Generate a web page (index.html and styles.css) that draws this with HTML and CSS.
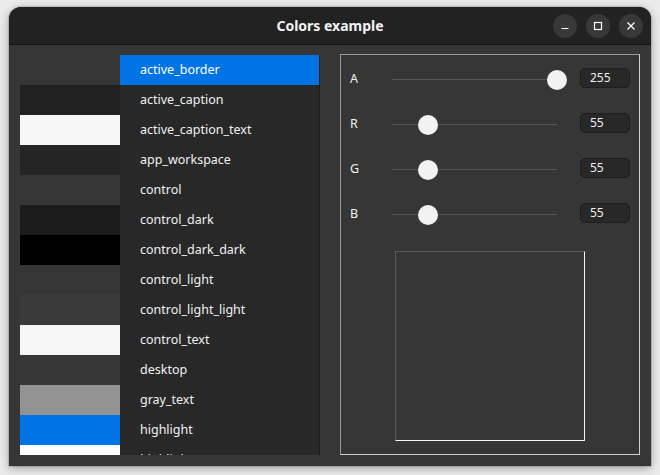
FILE: index.html
```html
<!DOCTYPE html>
<html>
<head>
<meta charset="utf-8">
<link rel="stylesheet" href="styles.css">
</head>
<body>
<div class="window">
  <div class="titlebar">
    <div class="title">Colors example</div>
    <div class="controls">
      <div class="cbtn"><svg width="10" height="10" viewBox="0 0 10 10"><path d="M1.5 7.5h7" stroke="#fff" stroke-width="1.2"/></svg></div>
      <div class="cbtn"><svg width="10" height="10" viewBox="0 0 10 10"><rect x="1.5" y="1.5" width="7" height="7" fill="none" stroke="#fff" stroke-width="1.2"/></svg></div>
      <div class="cbtn"><svg width="10" height="10" viewBox="0 0 10 10"><path d="M1.5 1.5l7 7M8.5 1.5l-7 7" stroke="#fff" stroke-width="1.2"/></svg></div>
    </div>
  </div>
  <div class="content">
    <div class="leftpane">
      <div class="swatches">
        <div class="sw" style="background:#363636"></div>
        <div class="sw" style="background:#212121"></div>
        <div class="sw" style="background:#f6f6f6"></div>
        <div class="sw" style="background:#252525"></div>
        <div class="sw" style="background:#363636"></div>
        <div class="sw" style="background:#1b1b1b"></div>
        <div class="sw" style="background:#000000"></div>
        <div class="sw" style="background:#363636"></div>
        <div class="sw" style="background:#3a3a3a"></div>
        <div class="sw" style="background:#f6f6f6"></div>
        <div class="sw" style="background:#363636"></div>
        <div class="sw" style="background:#939393"></div>
        <div class="sw" style="background:#0073e5"></div>
        <div class="sw" style="background:#ffffff"></div>
      </div>
      <div class="list">
        <div class="item selected">active_border</div>
        <div class="item">active_caption</div>
        <div class="item">active_caption_text</div>
        <div class="item">app_workspace</div>
        <div class="item">control</div>
        <div class="item">control_dark</div>
        <div class="item">control_dark_dark</div>
        <div class="item">control_light</div>
        <div class="item">control_light_light</div>
        <div class="item">control_text</div>
        <div class="item">desktop</div>
        <div class="item">gray_text</div>
        <div class="item">highlight</div>
        <div class="item">highlight_text</div>
      </div>
    </div>
    <div class="rightpane">
      <div class="srow">
        <div class="slabel">A</div>
        <div class="slider"><div class="track"></div><div class="thumb" style="left:100%"></div></div>
        <div class="num">255</div>
      </div>
      <div class="srow">
        <div class="slabel">R</div>
        <div class="slider"><div class="track"></div><div class="thumb" style="left:21.57%"></div></div>
        <div class="num">55</div>
      </div>
      <div class="srow">
        <div class="slabel">G</div>
        <div class="slider"><div class="track"></div><div class="thumb" style="left:21.57%"></div></div>
        <div class="num">55</div>
      </div>
      <div class="srow">
        <div class="slabel">B</div>
        <div class="slider"><div class="track"></div><div class="thumb" style="left:21.57%"></div></div>
        <div class="num">55</div>
      </div>
      <div class="preview"></div>
    </div>
  </div>
</div>
</body>
</html>
```
FILE: styles.css
```css
* { box-sizing: border-box; }
html, body { margin: 0; padding: 0; }
body {
  width: 660px;
  height: 475px;
  background: #ebebeb;
  overflow: hidden;
  font-family: "Noto Sans", "DejaVu Sans", sans-serif;
}
.window {
  margin: 7px 0 0 9px;
  width: 642px;
  height: 459px;
  background: #363636;
  border-radius: 12px 12px 0 0;
  box-shadow: 0 2px 10px rgba(0,0,0,0.35), 0 0 0 1px rgba(0,0,0,0.12);
  overflow: hidden;
  display: flex;
  flex-direction: column;
}
.titlebar {
  height: 38px;
  flex: none;
  background: #222222;
  border-bottom: 1px solid #161616;
  display: flex;
  align-items: center;
  justify-content: center;
  position: relative;
}
.title {
  color: #f2f2f2;
  font-weight: bold;
  font-size: 14px;
  margin-top: -1px;
}
.controls {
  position: absolute;
  right: 8px;
  top: 7px;
  display: flex;
  gap: 9px;
}
.cbtn {
  width: 24px;
  height: 24px;
  border-radius: 50%;
  background: #383838;
  display: flex;
  align-items: center;
  justify-content: center;
}
.content {
  flex: 1;
  display: flex;
  padding: 9px 11px 11px 11px;
  gap: 20px;
}
.leftpane {
  width: 300px;
  height: 400px;
  margin-top: 1px;
  display: flex;
  overflow: hidden;
}
.swatches {
  width: 100px;
  display: flex;
  flex-direction: column;
}
.sw { height: 30px; flex: none; }
.list {
  width: 200px;
  background: #282828;
  border-right: 1px solid #1e1e1e;
  overflow: hidden;
}
.item {
  height: 30px;
  line-height: 30px;
  padding-left: 20px;
  color: #f0f0f0;
  font-size: 12.5px;
}
.item.selected { background: #0073e5; color: #ffffff; }
.rightpane {
  width: 300px;
  height: 401px;
  border: 1px solid #9a9a9a;
  border-right-color: #cfcfcf;
  border-bottom-color: #cfcfcf;
  padding: 1px 9px 0 9px;
  display: flex;
  flex-direction: column;
}
.srow {
  height: 45px;
  display: flex;
  align-items: center;
}
.slabel {
  width: 42px;
  flex: none;
  color: #f0f0f0;
  font-size: 12.5px;
  margin-top: -1px;
}
.slider {
  position: relative;
  width: 165px;
  flex: none;
  height: 20px;
  margin-top: 2px;
}
.track {
  position: absolute;
  left: 0;
  right: 0;
  top: 9px;
  height: 1px;
  background: #555555;
}
.thumb {
  position: absolute;
  top: 0;
  width: 20px;
  height: 20px;
  margin-left: -10px;
  border-radius: 50%;
  background: #f2f2f2;
}
.num {
  width: 50px;
  flex: none;
  margin-left: 23px;
  height: 20px;
  border-radius: 5px;
  background: #282828;
  border: 1px solid #1e1e1e;
  color: #eeeeee;
  font-size: 12px;
  line-height: 18px;
  padding-left: 9px;
  margin-top: -2px;
}
.preview {
  width: 190px;
  height: 190px;
  margin: 15px auto 0 auto;
  border: 1px solid #5a5a5a;
  border-right-color: #f4f4f4;
  border-bottom-color: #f4f4f4;
}
```
